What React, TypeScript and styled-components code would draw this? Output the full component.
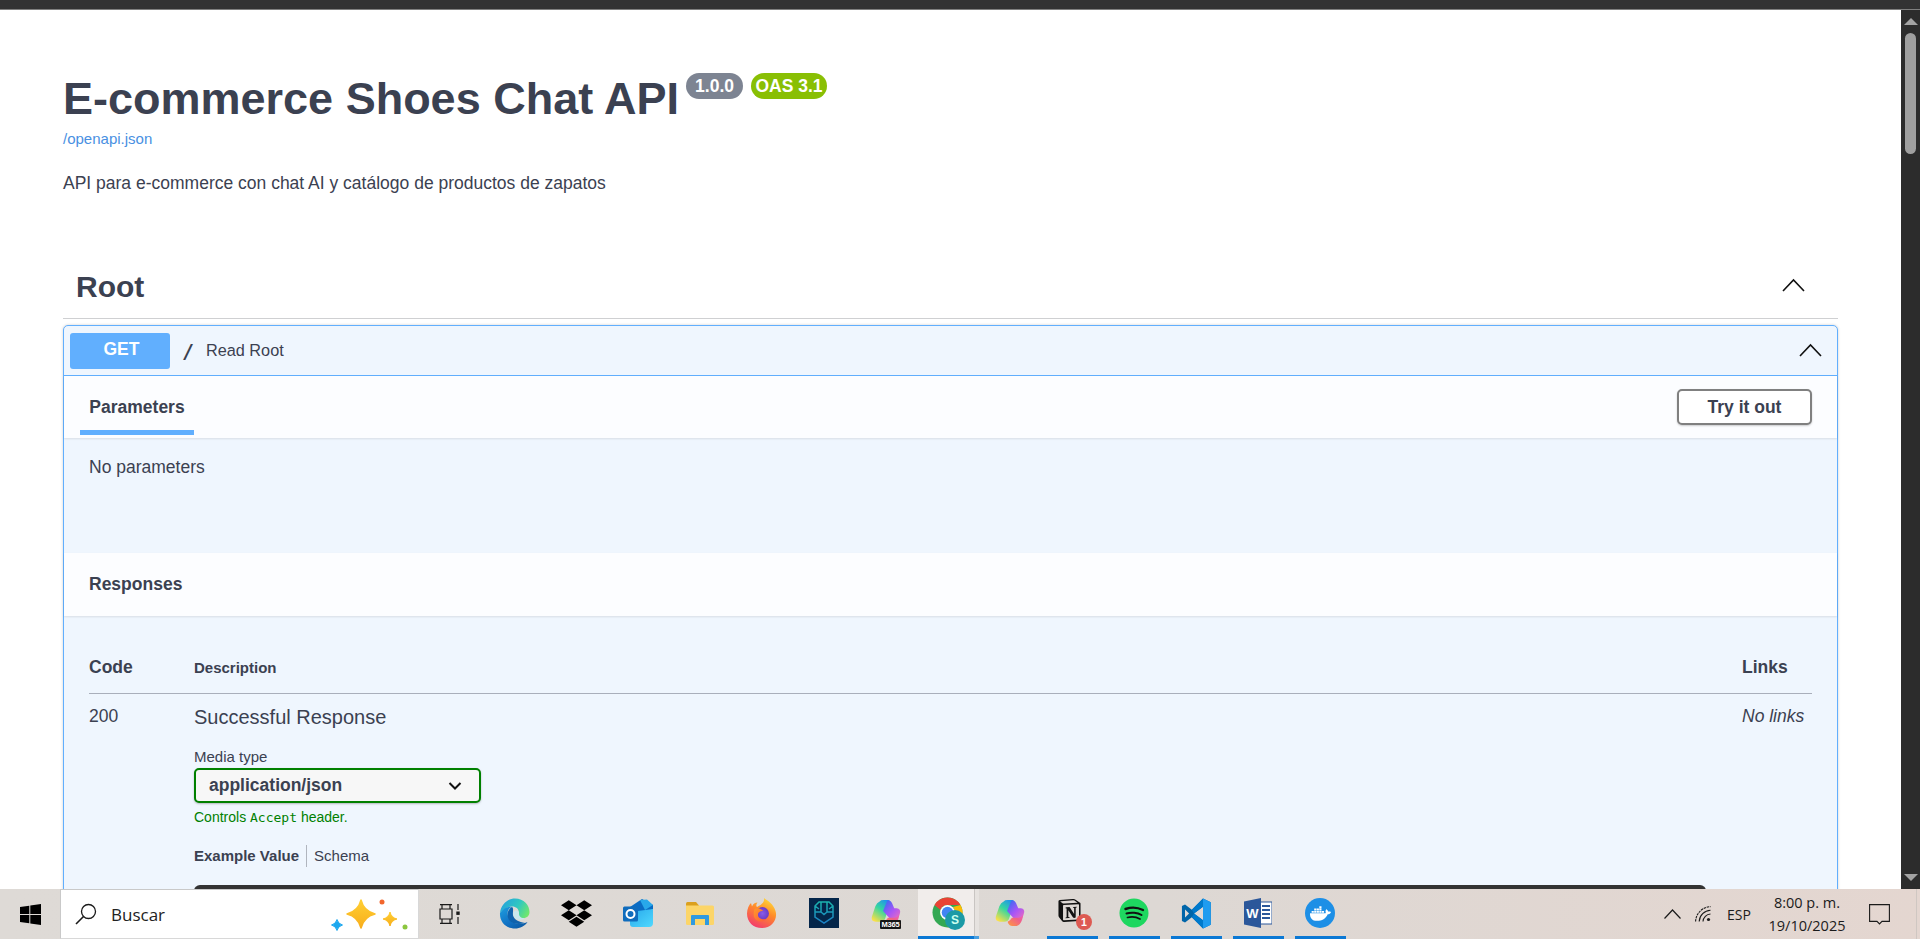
import React from 'react';
import styled, { createGlobalStyle } from 'styled-components';
import { FaDocker, FaDropbox } from 'react-icons/fa';
import { SiNotion } from 'react-icons/si';

const Global = createGlobalStyle`
  html, body { margin: 0; padding: 0; height: 100%; overflow: hidden; background: #fff; }
  * { box-sizing: border-box; }
`;
const Screen = styled.div`
  display: flex; flex-direction: column; height: 939px; width: 1920px; overflow: hidden;
  font-family: "Liberation Sans", Arial, sans-serif; color: #3b4151;
`;
const TopBar = styled.div`height: 10px; flex: none; background: #333; border-bottom: 1px solid #80807f;`;
const Main = styled.div`display: flex; height: 879px; flex: none; overflow: hidden;`;
const Page = styled.main`flex: 1; min-width: 0; background: #fff; padding: 0 63px; overflow: hidden;`;
const Scrollbar = styled.div`
  width: 19px; flex: none; background: #2c2c2c; display: flex; flex-direction: column; align-items: center;
  padding: 8px 0 8px;
`;
const ArrowUp = styled.div`
  width: 0; height: 0; border-left: 7px solid transparent; border-right: 7px solid transparent; border-bottom: 7px solid #a3a3a3;
`;
const ArrowDown = styled(ArrowUp)`margin-top: auto; border-bottom: 0; border-top: 7px solid #a3a3a3;`;
const Thumb = styled.div`width: 11px; height: 121px; margin-top: 8px; border-radius: 6px; background: #9f9f9f;`;

const TitleRow = styled.div`display: flex; align-items: flex-start; margin-top: 64px;`;
const Title = styled.h1`margin: 0 -1px 0 0; font-size: 45px; line-height: 50px; font-weight: 700; color: #3b4151;`;
const Badge = styled.span<{ $bg: string; $w: number }>`
  display: flex; align-items: center; justify-content: center; height: 26px; width: ${p => p.$w}px;
  margin: -1px 0 0 8px; border-radius: 13px; background: ${p => p.$bg}; color: #fff; font-size: 17.5px; font-weight: 700;
`;
const SpecLink = styled.a`display: block; margin-top: 6px; font-size: 15px; line-height: 18px; color: #4990e2;`;
const Description = styled.p`margin: 23px 0 0; font-size: 17.5px; line-height: 24px; color: #3b4151;`;

const SectionHead = styled.div`
  display: flex; align-items: center; justify-content: space-between; height: 64px; margin-top: 60px;
  padding: 0 33px 0 13px; border-bottom: 1px solid #cfd0d2;
`;
const SectionName = styled.h3`margin: 0; font-size: 30px; line-height: 36px; font-weight: 700; color: #3b4151;`;
const Chevron = styled.svg`display: block; width: 23px; height: 14px; margin-bottom: 3px; fill: none; stroke: #111; stroke-width: 1.6;`;

const Op = styled.section`
  margin-top: 6px; border: 1px solid #61affe; border-radius: 5px; background: #eff6fe;
  box-shadow: 0 0 3px rgba(0,0,0,.19);
`;
const OpHeader = styled.div`
  display: flex; align-items: center; height: 50px; padding: 0 15px 0 6px; border-bottom: 1px solid #61affe;
`;
const Method = styled.span`
  display: flex; align-items: center; justify-content: center; width: 100px; height: 36px; border-radius: 3px;
  padding-left: 3px; padding-bottom: 2px;
  background: #61affe; color: #fff; font-size: 17.5px; font-weight: 700;
`;
const PathText = styled.span`
  margin-left: 12px; width: 24px; font-family: "DejaVu Sans Mono", "Liberation Mono", monospace; font-size: 20px; font-weight: 700; color: #3b4151;
`;
const Summary = styled.span`font-size: 16.25px; color: #3b4151;`;
const OpChevron = styled(Chevron)`margin-left: auto; margin-bottom: 2px;`;

const TabHeader = styled.div`
  display: flex; align-items: flex-start; justify-content: space-between; height: 62px;
  background: #fcfdff; box-shadow: 0 1px 2px rgba(0,0,0,.1); padding: 0 25px 0 16px; position: relative;
`;
const Tab = styled.div`
  width: 114px; height: 59px; padding-top: 20px; text-align: center; border-bottom: 5px solid #61affe;
  font-size: 17.5px; line-height: 22px; font-weight: 700; color: #3b4151;
`;
const TryButton = styled.button`
  width: 135px; height: 36px; margin-top: 13px; background: #fff; border: 2px solid #808080; border-radius: 5px;
  box-shadow: 0 1px 2px rgba(0,0,0,.2);
  font: 700 17.5px "Liberation Sans", Arial, sans-serif; color: #3b4151; padding: 0;
`;
const ParamBody = styled.div`height: 115px; padding: 17px 25px 0; font-size: 17.5px; line-height: 24px;`;
const ResponsesHead = styled.div`
  height: 63px; background: #fcfdff; box-shadow: 0 1px 2px rgba(0,0,0,.1); padding: 20px 25px 0;
  font-size: 17.5px; line-height: 22px; font-weight: 700; position: relative;
`;
const Table = styled.div`padding: 0 25px 0 25px;`;
const HeadRow = styled.div`
  display: grid; grid-template-columns: 105px 1548px 1fr; align-items: center; height: 78px; padding-top: 25px;
  border-bottom: 1px solid #a9afbb;
`;
const HeadCell = styled.div<{ $small?: boolean }>`
  font-size: ${p => (p.$small ? 15 : 17.5)}px; font-weight: 700; color: #3b4151;
`;
const BodyRow = styled.div`display: grid; grid-template-columns: 105px 1548px 1fr; padding-top: 11px;`;
const StatusCell = styled.div`font-size: 17.5px; line-height: 22px;`;
const DescCell = styled.div`display: flex; flex-direction: column; align-items: flex-start;`;
const Message = styled.div`font-size: 20px; line-height: 24px; color: #3b4151;`;
const LinksCell = styled.div`font-size: 17.5px; line-height: 22px; font-style: italic;`;
const MediaLabel = styled.div`margin-top: 19px; font-size: 15px; line-height: 18px;`;
const SelectBox = styled.div`
  display: flex; align-items: center; justify-content: space-between; width: 287px; height: 35px; margin-top: 2px;
  padding: 0 17px 0 13px; background: #f7f7f7; border: 2.5px solid #008000; border-radius: 5px;
  box-shadow: 0 1px 2px rgba(0,0,0,.25); font-size: 17.5px; font-weight: 700; color: #3b4151;
`;
const SelectChevron = styled.svg`width: 14px; height: 10px; fill: none; stroke: #111; stroke-width: 2;`;
const Hint = styled.div`margin-top: 5px; font-size: 14px; line-height: 18px; color: #008000;`;
const HintCode = styled.code`font-family: "DejaVu Sans Mono", "Liberation Mono", monospace; font-size: 13px;`;
const ExampleTabs = styled.div`display: flex; align-items: center; margin-top: 18px; font-size: 15px; line-height: 22px;`;
const ActiveTab = styled.span`font-weight: 700; padding-right: 7px; border-right: 1px solid #b0b5be;`;
const IdleTab = styled.span`padding-left: 7px;`;
const CodeBlock = styled.div`width: 1512px; height: 200px; margin-top: 18px; background: #333; border-radius: 6px;`;

const Taskbar = styled.footer`
  display: flex; height: 50px; flex: none; align-items: stretch;
  background: linear-gradient(90deg, #dedad6 0%, #ddd8d4 60%, #e4d6d0 100%);
`;
const StartSlot = styled.div`width: 60px; flex: none; display: flex; align-items: center; justify-content: center;`;
const SearchBox = styled.div`
  width: 359px; flex: none; display: flex; align-items: center; padding-left: 14px; background: #fff;
  border: 1px solid #c9c9c9; border-bottom-color: #d8d8d8; border-right-color: #d8d8d8;
`;
const SearchText = styled.span`margin-left: 14px; font: 400 17px "Open Sans", "Noto Sans", sans-serif; color: #222;`;
const SearchArt = styled.svg`margin-left: auto; width: 90px; height: 48px; flex: none; margin-right: 3px;`;
const TaskView = styled.div`width: 64px; flex: none; display: flex; align-items: center; justify-content: center; padding-right: 3px;`;
const Slot = styled.div<{ $running?: boolean; $active?: boolean }>`
  width: 62px; flex: none; display: flex; align-items: center; justify-content: center; position: relative;
  padding-bottom: 2px;
  ${p => p.$active && 'background: linear-gradient(90deg, transparent 0 1px, #f1edeb 1px 57px, #c9c5c2 57px 58px, #e6e2df 58px);'}
  ${p => p.$running && `
    &::after {
      content: ''; position: absolute; left: ${p.$active ? '1px' : '6px'}; right: ${p.$active ? '0' : '5px'}; bottom: 0; height: 3px;
      background: ${p.$active ? 'linear-gradient(90deg, #0b78d4 0 56px, #4a9fe0 56px)' : '#0b78d4'};
    }
  `}
`;
const Tray = styled.div`margin-left: auto; display: flex; align-items: center; height: 100%; color: #1b1b1b; font-family: "Open Sans", "Noto Sans", sans-serif;`;
const TraySlot = styled.div<{ $w: number }>`width: ${p => p.$w}px; flex: none; display: flex; align-items: center; justify-content: center;`;
const Lang = styled.span`font-size: 14px;`;
const Clock = styled.div`display: flex; flex-direction: column; align-items: center; font-size: 14.5px; line-height: 23px; white-space: nowrap;`;
const EdgeLine = styled.div`width: 4px; height: 100%; border-left: 1px solid #cfc7c2; flex: none; margin-left: 12px;`;

const Up = ({ as: C = Chevron }: { as?: any }) => (
  <C viewBox="0 0 23 14"><path d="M1 13 L11.5 2 L22 13" /></C>
);

const Start = () => (
  <svg width="21" height="21" viewBox="0 0 21 21" fill="#000">
    <path d="M0 3 L9.3 1.7 V9.9 H0 Z M10.3 1.5 L21 0 V9.9 H10.3 Z M0 11 H9.3 V19.3 L0 18 Z M10.3 11 H21 V21 L10.3 19.5 Z" />
  </svg>
);
const SearchGlyph = () => (
  <svg width="22" height="22" viewBox="0 0 22 22" fill="none" stroke="#1a1a1a" strokeWidth="1.3">
    <circle cx="13.5" cy="8.5" r="7" /><path d="M8.5 13.5 L1 21" strokeWidth="1.6" />
  </svg>
);
const TaskViewGlyph = () => (
  <svg width="21" height="20" viewBox="0 0 21 20" fill="none" stroke="#1a1a1a" strokeWidth="1.2">
    <path d="M1 .6 H13 M1 19.4 H13 M1 5 H13 V15 H1 Z M3 .6 V5 M11 .6 V5 M3 15 V19.4 M11 15 V19.4 M19 0 V6 M19 13 V20" />
    <rect x="17.3" y="7.5" width="3.4" height="3.4" fill="#1a1a1a" stroke="none" />
  </svg>
);
const star = (cx: number, cy: number, r: number) => {
  const k = r * 0.2;
  return `M${cx} ${cy - r} Q${cx + k} ${cy - k} ${cx + r} ${cy} Q${cx + k} ${cy + k} ${cx} ${cy + r} Q${cx - k} ${cy + k} ${cx - r} ${cy} Q${cx - k} ${cy - k} ${cx} ${cy - r}Z`;
};
const Sparkles = () => (
  <SearchArt viewBox="0 0 90 48">
    <defs><linearGradient id="spk" x1="0" y1="0" x2="0" y2="1"><stop offset="0" stopColor="#ffcf33" /><stop offset="1" stopColor="#f8ae1c" /></linearGradient></defs>
    <path d={star(36, 24, 14)} fill="url(#spk)" stroke="url(#spk)" strokeWidth="1.5" strokeLinejoin="round" />
    <path d={star(65, 29, 7)} fill="url(#spk)" stroke="url(#spk)" strokeLinejoin="round" />
    <path d={star(12, 35, 5.5)} fill="#1ca8ef" stroke="#1ca8ef" strokeLinejoin="round" />
    <circle cx="57" cy="12" r="2.5" fill="#f2662c" />
    <circle cx="80" cy="37" r="2.5" fill="#8cc63f" />
  </SearchArt>
);

const EdgeIcon = () => (
  <svg width="31" height="31" viewBox="0 0 31 31">
    <defs>
      <linearGradient id="edgeA" x1="0" y1="0" x2=".8" y2="1"><stop offset="0" stopColor="#1e9fe0" /><stop offset=".6" stopColor="#1172c4" /><stop offset="1" stopColor="#0c59a4" /></linearGradient>
      <linearGradient id="edgeB" x1="0" y1=".3" x2="1" y2=".7"><stop offset="0" stopColor="#26a3dc" /><stop offset=".55" stopColor="#30c8c0" /><stop offset="1" stopColor="#72e86a" /></linearGradient>
    </defs>
    <path d="M1 15 C2 6 9 .5 16 .5 C25 .5 30.5 7 30.5 14 C30.5 19 26 21 22 20 C19 19.5 20 17 20 15 C20 10 16 8 12 8.5 C8 9 5 11 1 15Z" fill="url(#edgeB)" />
    <path d="M1 15 C5 10 9 8 13 9 C9 10 8 14 9 18 C10.5 24 17 27 24 25.5 C26 25 27.5 24.5 28.5 24 C26 28 21 30.5 16 30.5 C7 30.5 .5 24 1 15Z" fill="url(#edgeA)" />
    <path d="M13 9 C9 11 7 17 10 22 C13 26 20 27 26 25 C20 24 15 22 14 17 C13.5 14 15 10.5 13 9Z" fill="#0f62ad" />
    <path d="M14 16 C14.5 12 18 11.5 20 14.5 C19.5 18 22 20.5 26 20 C22 23.5 15 22 14 16Z" fill="#c9e7ee" />
  </svg>
);
const DropboxIcon = () => <FaDropbox size={31} color="#000" />;
const OutlookIcon = () => (
  <svg width="31" height="28" viewBox="0 0 31 28">
    <defs><linearGradient id="olB" x1="0" y1="0" x2="1" y2="1"><stop offset="0" stopColor="#28a8ea" /><stop offset="1" stopColor="#50d9ff" /></linearGradient></defs>
    <path d="M7 8 L19 0 L30 6 V10 L19 16 L7 11Z" fill="#0a6cc4" />
    <path d="M17 1 L24 0.5 L30 6 L22 11Z" fill="#28a8ea" />
    <path d="M7 13 L30 10 V24 Q30 28 26 28 H10 Q7 28 7 25Z" fill="url(#olB)" />
    <rect x="0" y="7.5" width="15" height="15" rx="1.5" fill="#0f6cbd" />
    <circle cx="7.5" cy="15" r="4" fill="none" stroke="#fff" strokeWidth="2" />
  </svg>
);
const FolderIcon = () => (
  <svg width="28" height="23" viewBox="0 0 28 23">
    <path d="M0 1.5 Q0 0 1.5 0 H10 L13 3.5 V5 H0Z" fill="#dba01e" />
    <path d="M0 3.5 H26.5 Q28 3.5 28 5 V21.5 Q28 23 26.5 23 H1.5 Q0 23 0 21.5Z" fill="#fcd568" />
    <path d="M5 23 V14 Q5 13 6 13 H22 Q23 13 23 14 V23 H19 V17 H9 V23Z" fill="#2f9ae0" />
  </svg>
);
const FirefoxIcon = () => (
  <svg width="30" height="30" viewBox="0 0 30 30">
    <defs>
      <linearGradient id="ffA" x1=".8" y1="0" x2=".3" y2="1"><stop offset="0" stopColor="#ffe03a" /><stop offset=".45" stopColor="#ff8a2a" /><stop offset="1" stopColor="#f23a6e" /></linearGradient>
      <linearGradient id="ffC" x1="0" y1="0" x2="1" y2="1"><stop offset="0" stopColor="#ff9a2a" /><stop offset="1" stopColor="#ff5a3a" /></linearGradient>
      <radialGradient id="ffB"><stop offset="0" stopColor="#8a5be8" /><stop offset="1" stopColor="#6a3cc4" /></radialGradient>
    </defs>
    <path d="M17 0 C21 3 26.5 6 28.5 13 C31 21 25 30 15 30 C6 30 0 24 0 15.5 C0 11 2 7 4 5 L5 8.5 C6 6 8 4.5 10.5 4.5 C9 6.5 9 8 10 9 C13 7 18 5 17 0Z" fill="url(#ffA)" />
    <circle cx="15.5" cy="15.5" r="6.4" fill="url(#ffB)" />
    <path d="M7.5 11 C11 9 15 11 16 13 C13 13 11 14 11 17 C11 20 15 22 19 21 C16 25 9 24 7 19 C6.5 16 6.7 13.5 7.5 11Z" fill="url(#ffC)" />
  </svg>
);
const ShieldApp = () => (
  <svg width="30" height="30" viewBox="0 0 30 30" fill="none">
    <defs><linearGradient id="shd" x1="0" y1="0" x2="0" y2="1"><stop offset="0" stopColor="#1bb3ad" /><stop offset="1" stopColor="#1a7fc4" /></linearGradient></defs>
    <rect width="30" height="30" fill="#04264a" />
    <path d="M6 8 L10 4 H20 L24 8 V19 L15 25 L6 19Z M12 4 V14 H6 M18 4 V14 H24 M6 8 L10 11 M24 8 L20 11 M12 14 L15 16.5 L18 14" stroke="url(#shd)" strokeWidth="1.5" />
  </svg>
);
const copilotPaths = (id: string) => (
  <>
    <defs>
      <linearGradient id={`${id}a`} x1=".8" y1="0" x2=".2" y2="1"><stop offset="0" stopColor="#1f8ff0" /><stop offset=".45" stopColor="#35d6a0" /><stop offset="1" stopColor="#fde047" /></linearGradient>
      <linearGradient id={`${id}b`} x1=".1" y1="0" x2=".9" y2="1"><stop offset="0" stopColor="#2f6df0" /><stop offset=".5" stopColor="#a855f7" /><stop offset="1" stopColor="#f472b6" /></linearGradient>
      <linearGradient id={`${id}c`} x1="0" y1="1" x2="1" y2="0"><stop offset="0" stopColor="#ff9a3c" /><stop offset=".6" stopColor="#f0608a" /><stop offset="1" stopColor="#e860c8" /></linearGradient>
    </defs>
    <path d="M9 2 Q10 .5 13 .5 H18 Q21 1 19.5 5.5 L14.5 20 Q13.5 23 9.5 23 H5 Q0 22.5 .8 18 L4.5 7 Q6 3 9 2Z" fill={`url(#${id}a)`} />
    <path d="M17 .8 Q20.5 .8 21.8 4 L24 9 H26.5 Q31 9.5 30 14 L27.5 21 Q25.5 25 22 22.5 L12.5 12Z" fill={`url(#${id}b)`} />
    <path d="M13 23 Q14.5 27.5 18 27.5 H21.5 Q26 27 28 21 L29.5 15 Q27.5 19 22 19 H17.5 L15.5 21.5Z" fill={`url(#${id}c)`} />
  </>
);
const M365Wrap = styled.div`position: relative; width: 30px; height: 29px;`;
const M365Label = styled.span`
  position: absolute; right: 0; bottom: -1px; width: 21px; height: 9px; background: #161616; color: #fff; border-radius: 1px;
  font-size: 7.5px; line-height: 9px; font-weight: 700; text-align: center; letter-spacing: -.2px;
`;
const M365Icon = () => (
  <M365Wrap>
    <svg width="30" height="29" viewBox="0 0 31 29">{copilotPaths('m')}</svg>
    <M365Label>M365</M365Label>
  </M365Wrap>
);
const CopilotIcon = () => <svg width="30" height="28" viewBox="0 0 31 28">{copilotPaths('c')}</svg>;
const ChromeWrap = styled.div`position: relative; width: 32px; height: 32px;`;
const ProfileDot = styled.span`
  position: absolute; right: -1px; bottom: -1px; width: 20px; height: 20px; border-radius: 50%; background: #1c9aa6;
  color: #cfe; font-size: 12px; line-height: 20px; font-weight: 700; text-align: center;
`;
const ChromeIcon = () => (
  <ChromeWrap>
    <svg width="31" height="31" viewBox="0 0 31 31">
      <circle cx="15.5" cy="15.5" r="15" fill="#34a853" />
      <path d="M15.5 .5 A15 15 0 0 1 28.5 8 H15.5 A7.5 7.5 0 0 0 8.5 13 L2.5 8 A15 15 0 0 1 15.5 .5Z" fill="#ea4335" />
      <path d="M28.5 8 A15 15 0 0 1 15.5 30.5 L22 18.5 A7.5 7.5 0 0 0 21 10 Z" fill="#fbbc04" />
      <circle cx="15.5" cy="15.5" r="7.4" fill="#fff" />
      <circle cx="15.5" cy="15.5" r="5.8" fill="#4285f4" />
    </svg>
    <ProfileDot>S</ProfileDot>
  </ChromeWrap>
);
const NotionWrap = styled.div`position: relative; width: 28px; height: 30px; padding-top: 1px;`;
const NotifBadge = styled.span`
  position: absolute; right: -6px; bottom: -2px; width: 16px; height: 16px; border-radius: 50%; background: #dd5a52;
  color: #fff; font-size: 10.5px; line-height: 16px; font-weight: 700; text-align: center;
`;
const NotionIcon = () => (
  <NotionWrap>
    <SiNotion size={23} color="#111" />
    <NotifBadge>1</NotifBadge>
  </NotionWrap>
);
const SpotifyIcon = () => (
  <svg width="30" height="30" viewBox="0 0 30 30" fill="none">
    <circle cx="15" cy="15" r="14.5" fill="#1ed760" />
    <g stroke="#111" strokeLinecap="round">
      <path d="M6.5 11 C12 9 19 9.5 24 12" strokeWidth="2.4" />
      <path d="M7.5 15.5 C12 14 18.5 14.5 22.5 17" strokeWidth="2" />
      <path d="M8.5 19.5 C12.5 18.5 17.5 19 21 21" strokeWidth="1.7" />
    </g>
  </svg>
);
const VSCodeIcon = () => (
  <svg width="31" height="31" viewBox="0 0 100 100">
    <path d="M71 2 L96 14 V86 L71 98 L35 62 L13 79 L3 74 V26 L13 21 L35 38Z" fill="#0065a9" />
    <path d="M71 2 L96 14 V86 L71 98 Z" fill="#1f9cf0" />
    <path d="M71 28 L42 50 L71 72Z" fill="#dfd9d6" />
    <path d="M13 37 L26 50 L13 63Z" fill="#dfd9d6" />
    <path d="M71 2 V28 L42 50 L35 38Z" fill="#007acc" />
    <path d="M71 98 V72 L42 50 L35 62Z" fill="#007acc" />
  </svg>
);
const WordIcon = () => (
  <svg width="28" height="30" viewBox="0 0 28 30">
    <rect x="13" y="4" width="15" height="22" fill="#fff" stroke="#2b579a" />
    <path d="M18 8 H26 M18 12 H26 M18 16 H26 M18 20 H26" stroke="#2b579a" strokeWidth="1.8" />
    <path d="M0 3.5 L17 0 V30 L0 26.5Z" fill="#2b579a" />
    <text x="8.5" y="20" textAnchor="middle" fontSize="13" fontWeight="700" fill="#fff" fontFamily="Liberation Sans">W</text>
  </svg>
);
const DockerBadge = styled.div`
  width: 30px; height: 30px; border-radius: 50%; background: #1d8fe6; display: flex; align-items: center; justify-content: center;
`;
const DockerIcon = () => <DockerBadge><FaDocker size={21} color="#fff" /></DockerBadge>;
const TrayUp = () => (
  <svg width="17" height="10" viewBox="0 0 17 10" fill="none" stroke="#1a1a1a" strokeWidth="1.2"><path d="M.5 9.5 L8.5 1 L16.5 9.5" /></svg>
);
const Wifi = () => (
  <svg width="16" height="16" viewBox="0 0 16 16" fill="none" stroke="#1a1a1a" strokeWidth="1.1">
    <path d="M.6 15.5 C.8 7.5 7.5 .8 15.5 .6" strokeDasharray="2.4 .8" />
    <path d="M4.2 15.5 C4.4 9.5 9.5 4.4 15.5 4.2" />
    <path d="M8 15.5 C8.2 11.5 11.5 8.2 15.5 8" />
    <circle cx="13.5" cy="13.5" r="1.6" fill="#1a1a1a" stroke="none" />
  </svg>
);
const NotifyGlyph = () => (
  <svg width="21" height="21" viewBox="0 0 21 21" fill="none" stroke="#1a1a1a" strokeWidth="1.1">
    <path d="M.6 .6 H20.4 V17.4 H13 L10.5 20 L8 17.4 H.6Z" />
  </svg>
);

export default function App() {
  return (
    <Screen>
      <Global />
      <TopBar />
      <Main>
        <Page>
          <TitleRow>
            <Title>E-commerce Shoes Chat API</Title>
            <Badge $bg="#7d8492" $w={57}>1.0.0</Badge>
            <Badge $bg="#89bf04" $w={76}>OAS 3.1</Badge>
          </TitleRow>
          <SpecLink>/openapi.json</SpecLink>
          <Description>API para e-commerce con chat AI y catálogo de productos de zapatos</Description>
          <SectionHead>
            <SectionName>Root</SectionName>
            <Up />
          </SectionHead>
          <Op>
            <OpHeader>
              <Method>GET</Method>
              <PathText>/</PathText>
              <Summary>Read Root</Summary>
              <Up as={OpChevron} />
            </OpHeader>
            <TabHeader>
              <Tab>Parameters</Tab>
              <TryButton>Try it out</TryButton>
            </TabHeader>
            <ParamBody>No parameters</ParamBody>
            <ResponsesHead>Responses</ResponsesHead>
            <Table>
              <HeadRow>
                <HeadCell>Code</HeadCell>
                <HeadCell $small>Description</HeadCell>
                <HeadCell>Links</HeadCell>
              </HeadRow>
              <BodyRow>
                <StatusCell>200</StatusCell>
                <DescCell>
                  <Message>Successful Response</Message>
                  <MediaLabel>Media type</MediaLabel>
                  <SelectBox>
                    application/json
                    <SelectChevron viewBox="0 0 14 10"><path d="M1.5 2 L7 7.5 L12.5 2" /></SelectChevron>
                  </SelectBox>
                  <Hint>Controls <HintCode>Accept</HintCode> header.</Hint>
                  <ExampleTabs><ActiveTab>Example Value</ActiveTab><IdleTab>Schema</IdleTab></ExampleTabs>
                  <CodeBlock />
                </DescCell>
                <LinksCell>No links</LinksCell>
              </BodyRow>
            </Table>
          </Op>
        </Page>
        <Scrollbar>
          <ArrowUp />
          <Thumb />
          <ArrowDown />
        </Scrollbar>
      </Main>
      <Taskbar>
        <StartSlot><Start /></StartSlot>
        <SearchBox>
          <SearchGlyph />
          <SearchText>Buscar</SearchText>
          <Sparkles />
        </SearchBox>
        <TaskView><TaskViewGlyph /></TaskView>
        <Slot><EdgeIcon /></Slot>
        <Slot><DropboxIcon /></Slot>
        <Slot><OutlookIcon /></Slot>
        <Slot><FolderIcon /></Slot>
        <Slot><FirefoxIcon /></Slot>
        <Slot><ShieldApp /></Slot>
        <Slot><M365Icon /></Slot>
        <Slot $running $active><ChromeIcon /></Slot>
        <Slot><CopilotIcon /></Slot>
        <Slot $running><NotionIcon /></Slot>
        <Slot $running><SpotifyIcon /></Slot>
        <Slot $running><VSCodeIcon /></Slot>
        <Slot $running><WordIcon /></Slot>
        <Slot $running><DockerIcon /></Slot>
        <Tray>
          <TraySlot $w={32}><TrayUp /></TraySlot>
          <TraySlot $w={30}><Wifi /></TraySlot>
          <TraySlot $w={42}><Lang>ESP</Lang></TraySlot>
          <TraySlot $w={94}><Clock><span>8:00 p. m.</span><span>19/10/2025</span></Clock></TraySlot>
          <TraySlot $w={50}><NotifyGlyph /></TraySlot>
          <EdgeLine />
        </Tray>
      </Taskbar>
    </Screen>
  );
}
